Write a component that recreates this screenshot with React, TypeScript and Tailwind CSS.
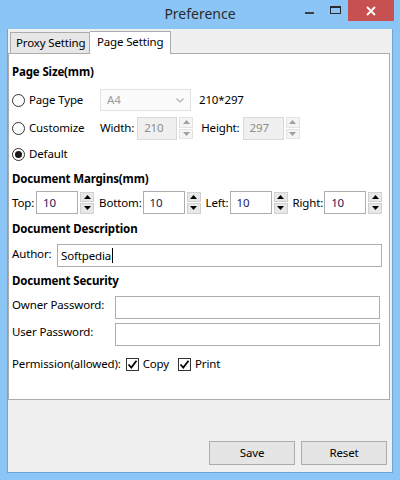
import React from "react";

const font = { fontFamily: '"Noto Sans", "Open Sans", sans-serif' };

function Spinner({ disabled }: { disabled?: boolean }) {
  const tri = disabled ? "#a0a0a0" : "#000";
  const box = disabled ? "border-[#e3e3e3] bg-[#f4f4f4]" : "border-[#d0d0d0] bg-[#e8e8e8]";
  return (
    <div className="flex flex-col w-[14px] h-[22px] gap-[1px] shrink-0">
      <div className={`flex-1 flex items-center justify-center border ${box}`}>
        <svg width="7" height="4" viewBox="0 0 7 4"><path d="M0 4 L3.5 0 L7 4 Z" fill={tri} /></svg>
      </div>
      <div className={`flex-1 flex items-center justify-center border ${box}`}>
        <svg width="7" height="4" viewBox="0 0 7 4"><path d="M0 0 L3.5 4 L7 0 Z" fill={tri} /></svg>
      </div>
    </div>
  );
}

function NumBox({ value, w, disabled }: { value: string; w: string; disabled?: boolean }) {
  return (
    <div className="flex items-center gap-[2px] shrink-0">
      <div
        className={`${w} h-[23px] border flex items-center pl-[6px] shrink-0 ${disabled ? "border-[#d9d9d9] bg-[#f0f0f0] text-[#8d8d8d]" : "border-[#abadb3] bg-white text-[#1a1a5e]"}`}
      >
        {value}
      </div>
      <Spinner disabled={disabled} />
    </div>
  );
}

function Radio({ checked, label }: { checked?: boolean; label: string }) {
  return (
    <div className="flex items-center gap-[4px] whitespace-nowrap">
      <div className="w-[13px] h-[13px] rounded-full border border-[#333] bg-white flex items-center justify-center shrink-0">
        {checked && <div className="w-[7px] h-[7px] rounded-full bg-[#1a1a1a]" />}
      </div>
      <span>{label}</span>
    </div>
  );
}

function Check({ label }: { label: string }) {
  return (
    <div className="flex items-center gap-[4px] whitespace-nowrap">
      <div className="w-[13px] h-[13px] border border-[#333] bg-white flex items-center justify-center shrink-0">
        <svg width="11" height="11" viewBox="0 0 11 11">
          <path d="M1.5 5.5 L4.3 8.5 L9.5 1.8" stroke="#000" strokeWidth="1.8" fill="none" />
        </svg>
      </div>
      <span>{label}</span>
    </div>
  );
}

export default function App() {
  return (
    <div className="w-[400px] h-[480px] bg-[#8bc5f6] flex flex-col text-[11.5px] tracking-[-0.15px] text-[#000] whitespace-nowrap" style={font}>
      {/* Title bar */}
      <div className="relative h-[29px] flex items-center justify-center">
        <span className="text-[14px] tracking-normal text-[#2b2b2b] pb-[2px]">Preference</span>
        <div className="absolute right-[6px] top-0 flex items-start">
          <div className="w-[26px] h-[20px] flex items-center justify-center">
            <div className="w-[9px] h-[2px] bg-[#3c3c3c] mt-[5px]" />
          </div>
          <div className="w-[26px] h-[20px] flex items-center justify-center">
            <div className="w-[11px] h-[8px] border border-[#2b2b2b] border-t-[2px]" />
          </div>
          <div className="w-[46px] h-[21px] bg-[#c75050] flex items-center justify-center">
            <svg width="10" height="10" viewBox="0 0 10 10">
              <path d="M1 1 L9 9 M9 1 L1 9" stroke="#fff" strokeWidth="1.8" />
            </svg>
          </div>
        </div>
      </div>

      {/* Client */}
      <div className="mx-[7px] mb-[7px] flex-1 bg-[#f0f0f0] border border-t-0 border-[#6ea3d6] flex flex-col">
        {/* Tabs */}
        <div className="flex items-end h-[24px] pl-[2px] relative z-10">
          <div className="h-[21px] w-[80px] border border-[#acacac] border-b-0 bg-[#e7e7e7] flex items-center pl-[5px]">
            Proxy Setting
          </div>
          <div className="h-[23px] w-[81px] border border-[#acacac] border-b-0 border-l-0 bg-white flex items-center pl-[7px] -mb-[1px] pb-[2px]">
            Page Setting
          </div>
        </div>
        {/* Panel */}
        <div className="mr-[2px] h-[347px] bg-white border border-[#acacac] flex flex-col pl-[3px]">
          <div className="h-[20px] mt-[8px] flex items-center font-bold">Page Size(mm)</div>
          <div className="h-[22px] mt-[7px] flex items-center">
            <div className="w-[88px] shrink-0"><Radio label="Page Type" /></div>
            <div className="w-[91px] h-[22px] border border-[#e2e2e2] bg-[#fbfbfb] flex items-center justify-between px-[6px] text-[#9a9a9a] shrink-0">
              <span>A4</span>
              <svg width="8" height="5" viewBox="0 0 8 5"><path d="M0.5 0.5 L4 4 L7.5 0.5" stroke="#b0b0b0" strokeWidth="1.2" fill="none" /></svg>
            </div>
            <span className="ml-[8px]">210*297</span>
          </div>
          <div className="h-[24px] mt-[5px] flex items-center">
            <div className="w-[88px] shrink-0"><Radio label="Customize" /></div>
            <span className="mr-[3px]">Width:</span>
            <NumBox value="210" w="w-[40px]" disabled />
            <span className="ml-[8px] mr-[3px]">Height:</span>
            <NumBox value="297" w="w-[41px]" disabled />
          </div>
          <div className="h-[20px] mt-[4px] flex items-center">
            <Radio checked label="Default" />
          </div>
          <div className="h-[20px] mt-[5px] flex items-center font-bold">Document Margins(mm)</div>
          <div className="h-[23px] mt-[2px] flex items-center">
            <span className="mr-[2px]">Top:</span>
            <NumBox value="10" w="w-[42px]" />
            <span className="ml-[5px] mr-[1px]">Bottom:</span>
            <NumBox value="10" w="w-[42px]" />
            <span className="ml-[5px] mr-[1px]">Left:</span>
            <NumBox value="10" w="w-[42px]" />
            <span className="ml-[5px] mr-[1px]">Right:</span>
            <NumBox value="10" w="w-[42px]" />
          </div>
          <div className="h-[20px] mt-[5px] flex items-center font-bold">Document Description</div>
          <div className="h-[23px] mt-[5px] flex items-center">
            <span className="w-[45px] shrink-0 -mt-[4px]">Author:</span>
            <div className="w-[325px] h-[23px] border border-[#abadb3] flex items-center pl-[3px]">
              Softpedia<span className="w-[1px] h-[15px] bg-black ml-[1px]" />
            </div>
          </div>
          <div className="h-[20px] mt-[4px] flex items-center font-bold">Document Security</div>
          <div className="h-[23px] mt-[5px] flex items-start">
            <span className="w-[103px] shrink-0">Owner Password:</span>
            <div className="w-[265px] h-[23px] border border-[#abadb3]" />
          </div>
          <div className="h-[23px] mt-[4px] flex items-start">
            <span className="w-[103px] shrink-0">User Password:</span>
            <div className="w-[265px] h-[23px] border border-[#abadb3]" />
          </div>
          <div className="h-[20px] mt-[8px] flex items-center gap-[5px]">
            <span>Permission(allowed):</span>
            <Check label="Copy" />
            <div className="ml-[4px]"><Check label="Print" /></div>
          </div>
        </div>
        {/* Buttons */}
        <div className="flex-1 flex items-end justify-end gap-[6px] pr-[5px] pb-[7px]">
          <div className="w-[86px] h-[24px] border border-[#acacac] bg-[#e5e5e5] flex items-center justify-center">Save</div>
          <div className="w-[86px] h-[24px] border border-[#acacac] bg-[#e5e5e5] flex items-center justify-center">Reset</div>
        </div>
      </div>
    </div>
  );
}
